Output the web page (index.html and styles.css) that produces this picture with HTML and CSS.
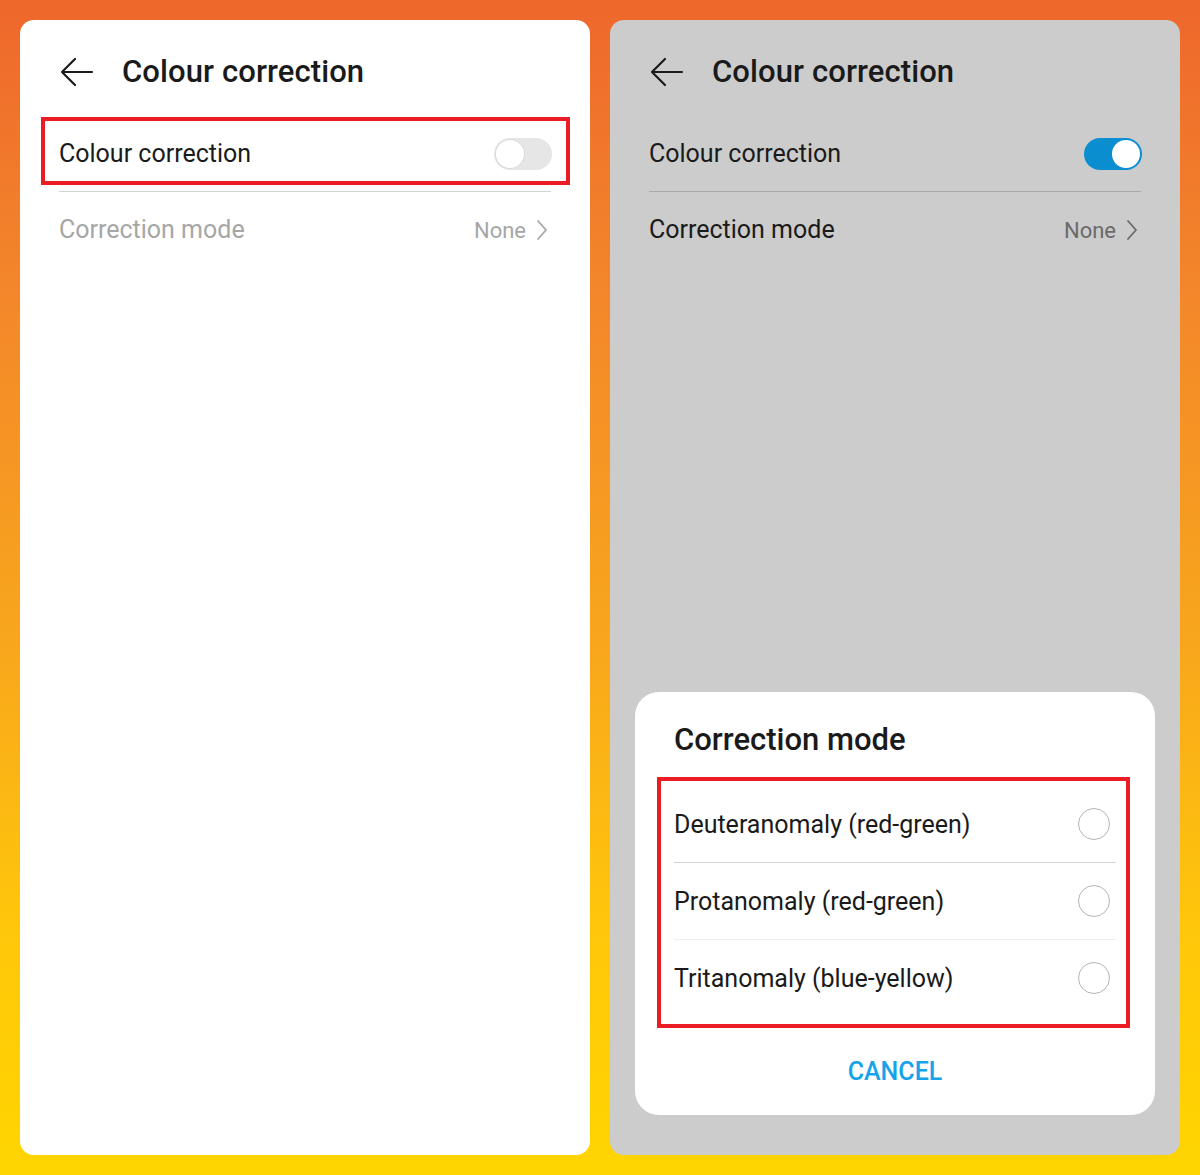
FILE: index.html
```html
<!DOCTYPE html>
<html lang="en">
<head>
<meta charset="utf-8">
<title>Colour correction</title>
<link rel="stylesheet" href="styles.css">
</head>
<body>
<main class="stage">
  <section class="screen screen-light">
    <header class="appbar">
      <svg class="back" width="36" height="32" viewBox="0 0 36 32" aria-hidden="true"><path d="M3 16H33M16 3L3 16L16 29" fill="none" stroke="#1a1a1a" stroke-width="2.2" stroke-linecap="round" stroke-linejoin="round"/></svg>
      <h1 class="appbar-title">Colour correction</h1>
    </header>
    <div class="list">
      <div class="mark">
        <div class="row row-switch">
          <span class="row-label">Colour correction</span>
          <span class="switch"><span class="knob"></span></span>
        </div>
      </div>
      <div class="divider"></div>
      <div class="row row-nav disabled">
        <span class="row-label">Correction mode</span>
        <span class="row-value">None
          <svg class="chev" width="12" height="22" viewBox="0 0 12 22" aria-hidden="true"><path d="M2 2L10 11L2 20" fill="none" stroke="currentColor" stroke-width="1.8" stroke-linecap="round" stroke-linejoin="round"/></svg>
        </span>
      </div>
    </div>
  </section>

  <section class="screen screen-dim">
    <header class="appbar">
      <svg class="back" width="36" height="32" viewBox="0 0 36 32" aria-hidden="true"><path d="M3 16H33M16 3L3 16L16 29" fill="none" stroke="#1a1a1a" stroke-width="2.2" stroke-linecap="round" stroke-linejoin="round"/></svg>
      <h1 class="appbar-title">Colour correction</h1>
    </header>
    <div class="list">
      <div class="mark mark-none">
        <div class="row row-switch">
          <span class="row-label">Colour correction</span>
          <span class="switch switch-on"><span class="knob"></span></span>
        </div>
      </div>
      <div class="divider divider-dim"></div>
      <div class="row row-nav">
        <span class="row-label">Correction mode</span>
        <span class="row-value">None
          <svg class="chev" width="12" height="22" viewBox="0 0 12 22" aria-hidden="true"><path d="M2 2L10 11L2 20" fill="none" stroke="currentColor" stroke-width="1.8" stroke-linecap="round" stroke-linejoin="round"/></svg>
        </span>
      </div>
    </div>

    <div class="dialog">
      <h2 class="dialog-title">Correction mode</h2>
      <div class="options">
        <div class="option">
          <span class="option-label">Deuteranomaly (red-green)</span>
          <span class="radio"></span>
        </div>
        <div class="option-divider"></div>
        <div class="option">
          <span class="option-label">Protanomaly (red-green)</span>
          <span class="radio"></span>
        </div>
        <div class="option-divider option-divider-light"></div>
        <div class="option">
          <span class="option-label">Tritanomaly (blue-yellow)</span>
          <span class="radio"></span>
        </div>
      </div>
      <div class="dialog-actions">
        <span class="btn-text">CANCEL</span>
      </div>
    </div>
  </section>
</main>
</body>
</html>
```

FILE: styles.css
```css
* { box-sizing: border-box; }

html, body {
  margin: 0;
  padding: 0;
}

body {
  width: 1200px;
  height: 1175px;
  font-family: Roboto, "Liberation Sans", Arial, sans-serif;
  color: #1a1a1a;
  background: linear-gradient(180deg, #ee672c 0%, #f3872a 25%, #f8a71c 55%, #ffc80a 80%, #ffd500 100%);
  overflow: hidden;
}

.stage {
  display: flex;
  gap: 20px;
  padding: 20px;
  height: 1175px;
}

.screen {
  flex: 0 0 570px;
  height: 1135px;
  border-radius: 14px;
  display: flex;
  flex-direction: column;
  overflow: hidden;
}

.screen-light { background: #ffffff; }
.screen-dim { background: #cccccc; }

.appbar {
  display: flex;
  align-items: center;
  padding: 32px 0 20px 39px;
  height: 92px;
}

.back { display: block; flex: none; }

.appbar-title {
  margin: 0 0 0 27px;
  font-size: 31px;
  line-height: 40px;
  font-weight: 500;
  color: #1a1a1a;
  letter-spacing: 0.1px;
}

.list {
  padding: 0 39px;
  display: flex;
  flex-direction: column;
}

.mark {
  margin: 5px -19px 0 -18px;
  border: 4px solid #ec1c24;
  padding: 5px 15px 0 14px;
}

.mark-none { border-color: transparent; }

.row {
  display: flex;
  align-items: center;
  justify-content: space-between;
}

.row-switch { height: 55px; }

.row-label {
  font-size: 25px;
  line-height: 32px;
}

.switch {
  position: relative;
  width: 58px;
  height: 32px;
  border-radius: 16px;
  background: #e6e6e6;
  flex: none;
  margin-right: -1px;
}

.switch .knob {
  position: absolute;
  top: 2px;
  left: 2px;
  width: 28px;
  height: 28px;
  border-radius: 50%;
  background: #ffffff;
  box-shadow: 0 0 0 1px #d9d9d9;
}

.switch-on { background: #0a8ed0; }

.switch-on .knob {
  left: auto;
  right: 2px;
  box-shadow: none;
}

.divider {
  height: 1px;
  background: #d2d2d2;
  margin-top: 6px;
}

.divider-dim { background: #a9a9a9; }

.row-nav { height: 76px; }

.disabled .row-label { color: #a6a6a6; }

.row-value {
  display: flex;
  align-items: center;
  gap: 10px;
  font-size: 22px;
  color: #6a6a6a;
  padding-right: 3px;
}

.disabled .row-value { color: #a6a6a6; }

.chev { display: block; }

.dialog {
  margin: auto 25px 40px;
  background: #ffffff;
  border-radius: 24px;
  padding: 28px 25px 23px 22px;
}

.dialog-title {
  margin: 0 0 17px 17px;
  font-size: 31px;
  line-height: 40px;
  font-weight: 500;
  color: #1a1a1a;
}

.options {
  border: 4px solid #ec1c24;
  padding: 5px 10px 8px 13px;
  display: flex;
  flex-direction: column;
}

.option {
  height: 76px;
  display: flex;
  align-items: center;
  justify-content: space-between;
}

.option-label {
  font-size: 25px;
  line-height: 32px;
  color: #1a1a1a;
  padding-top: 2px;
}

.radio {
  width: 32px;
  height: 32px;
  border-radius: 50%;
  border: 1.5px solid #b4b4b4;
  margin-right: 6px;
  flex: none;
}

.option-divider {
  height: 1px;
  background: #d4d4d4;
}

.option-divider-light { background: #eeeeee; }

.dialog-actions {
  margin-top: 24px;
  display: flex;
  justify-content: center;
  padding-left: 3px;
}

.btn-text {
  font-size: 25px;
  line-height: 40px;
  font-weight: 500;
  color: #16a3e9;
}
```
